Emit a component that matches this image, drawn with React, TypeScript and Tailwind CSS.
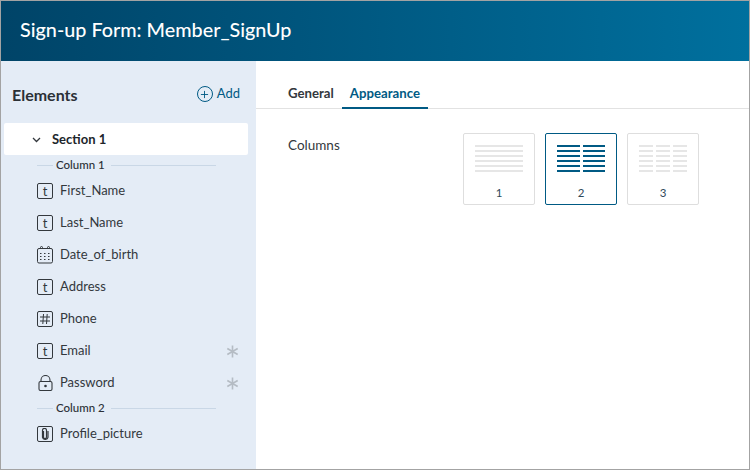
import { Plus } from "lucide-react";

type FieldKind = "text" | "date" | "number" | "lock" | "file";

function FieldIcon({ kind }: { kind: FieldKind }) {
  if (kind === "date") {
    return (
      <svg width="16" height="18" viewBox="0 0 16 18" fill="none" stroke="#33383d" strokeWidth="1">
        <rect x="0.5" y="2.5" width="15" height="14.5" rx="1.5" />
        <path d="M3.5 3V1.5a1 1 0 0 1 2 0V3M10.5 3V1.5a1 1 0 0 1 2 0V3" />
        <path d="M3 7.5h2M7 7.5h2M11 7.5h2M3 10.5h2M7 10.5h2M11 10.5h2M3 13.5h2M7 13.5h2M11 13.5h2" strokeDasharray="1.5 0.5" />
      </svg>
    );
  }
  if (kind === "lock") {
    return (
      <svg width="15" height="16" viewBox="0 0 15 16" fill="none" stroke="#33383d" strokeWidth="1.1">
        <rect x="1" y="6.5" width="13" height="9" rx="1.5" />
        <path d="M3 6.5V5a4.5 4.5 0 0 1 9 0v1.5" />
        <circle cx="7.5" cy="11" r="1.3" fill="#33383d" stroke="none" />
      </svg>
    );
  }
  return (
    <div className="w-4 h-4 rounded-[2px] border border-[#33383d] flex items-center justify-center text-[13px] leading-none text-[#33383d]">
      {kind === "text" && "t"}
      {kind === "number" && (
        <svg width="12" height="12" viewBox="0 0 12 12" fill="none" stroke="#33383d" strokeWidth="1">
          <path d="M4.5 1 3.8 11M8.2 1 7.5 11M1 4h10M1 8h10" />
        </svg>
      )}
      {kind === "file" && (
        <svg width="8" height="12" viewBox="0 0 8 12" fill="none" stroke="#33383d" strokeWidth="1.2">
          <path d="M2.5 3v6a1.5 1.5 0 0 0 3 0V2.5a2 2 0 0 0-4-.2V9.3a2.8 2.6 0 0 0 5.5 0V3" />
        </svg>
      )}
    </div>
  );
}

function ColumnLabel({ label }: { label: string }) {
  return (
    <div className="flex items-center h-[18px] pl-9 pr-10 text-[11.5px] text-[#2b3036]">
      <div className="w-4 h-px bg-[#c9d7e6]" />
      <span className="pl-[3px] pr-[6px] font-medium">{label}</span>
      <div className="flex-1 h-px bg-[#c9d7e6]" />
    </div>
  );
}

function FieldRow({ kind, name, required }: { kind: FieldKind; name: string; required?: boolean }) {
  return (
    <div className="flex items-center h-8 pl-9 pr-[17px] text-[13px] text-[#33383d]">
      <div className="w-4 flex justify-center">
        <FieldIcon kind={kind} />
      </div>
      <span className="ml-[7px] flex-1">{name}</span>
      {required && (
        <svg width="13" height="13" viewBox="0 0 12 12" fill="none" stroke="#b5bcc4" strokeWidth="1.5">
          <path d="M6 0.5v11M1.2 3.2l9.6 5.6M10.8 3.2 1.2 8.8" />
        </svg>
      )}
    </div>
  );
}

function ColumnCard({ n, selected }: { n: number; selected?: boolean }) {
  const color = selected ? "bg-[#005a84]" : "bg-[#e6e6e6]";
  return (
    <div className={`w-[72px] h-[72px] rounded-[2px] border flex flex-col items-center ${selected ? "border-[#005a84]" : "border-[#dedede]"}`}>
      <div className="flex gap-[3px] w-12 mt-[11px]">
        {Array.from({ length: n }).map((_, c) => (
          <div key={c} className="flex-1 flex flex-col gap-[3px]">
            {[0, 1, 2, 3, 4, 5].map((r) => (
              <div key={r} className={`h-[2px] ${color}`} />
            ))}
          </div>
        ))}
      </div>
      <div className="mt-[13px] text-[11.5px] leading-4 text-[#2f4a5a]">{n}</div>
    </div>
  );
}

export default function App() {
  return (
    <div className="w-[750px] h-[470px] border border-[#a3a3a3] flex flex-col bg-white overflow-hidden font-['Lato',sans-serif]">
      <div className="h-[60px] shrink-0 flex items-center pl-[19px] pb-[2px] bg-gradient-to-r from-[#004468] to-[#00709e] text-white text-[19.8px] font-medium">
        Sign-up Form: Member_SignUp
      </div>
      <div className="flex flex-1 min-h-0">
        <div className="w-[255px] shrink-0 bg-[#e4ecf6] flex flex-col">
          <div className="flex items-center justify-between h-[62px] pl-[11px] pr-[16px] pt-[6px]">
            <span className="text-[16px] font-bold text-[#2b3036]">Elements</span>
            <div className="flex items-center gap-1 text-[#005a84] text-[13px] -mt-[2px]">
              <span className="w-4 h-4 rounded-full border-[1.5px] border-[#005a84] flex items-center justify-center">
                <Plus size={11} strokeWidth={2} />
              </span>
              Add
            </div>
          </div>
          <div className="ml-[3px] mr-[8px] h-8 bg-white rounded-[2px] flex items-center pl-[28px] pt-[1px] text-[13px] font-bold text-[#20252a]">
            <svg width="9" height="6" viewBox="0 0 9 6" fill="none" stroke="#33383d" strokeWidth="1.3">
              <path d="M1 1l3.5 3.5L8 1" />
            </svg>
            <span className="ml-[11px]">Section 1</span>
          </div>
          <div className="mt-[1px]">
            <ColumnLabel label="Column 1" />
            <div className="mt-[1px]">
              <FieldRow kind="text" name="First_Name" />
              <FieldRow kind="text" name="Last_Name" />
              <FieldRow kind="date" name="Date_of_birth" />
              <FieldRow kind="text" name="Address" />
              <FieldRow kind="number" name="Phone" />
              <FieldRow kind="text" name="Email" required />
              <FieldRow kind="lock" name="Password" required />
            </div>
            <ColumnLabel label="Column 2" />
            <div className="mt-[1px]">
              <FieldRow kind="file" name="Profile_picture" />
            </div>
          </div>
        </div>
        <div className="flex-1 min-w-0 flex flex-col">
          <div className="h-[48px] shrink-0 border-b border-[#e2e2e2] flex items-end pl-[23px] text-[13.2px]">
            <div className="h-[48px] flex items-center pl-[9px] pr-[8px] pt-[19px] font-bold text-[#33383d]">General</div>
            <div className="h-[48px] flex items-center px-[8px] pt-[19px] -mb-px border-b-2 border-[#005a84] font-bold text-[#005a84]">Appearance</div>
          </div>
          <div className="flex pt-6 pl-8">
            <div className="w-[175px] text-[13.5px] text-[#33383d] leading-6">Columns</div>
            <div className="flex gap-[10px]">
              <ColumnCard n={1} />
              <ColumnCard n={2} selected />
              <ColumnCard n={3} />
            </div>
          </div>
        </div>
      </div>
    </div>
  );
}
